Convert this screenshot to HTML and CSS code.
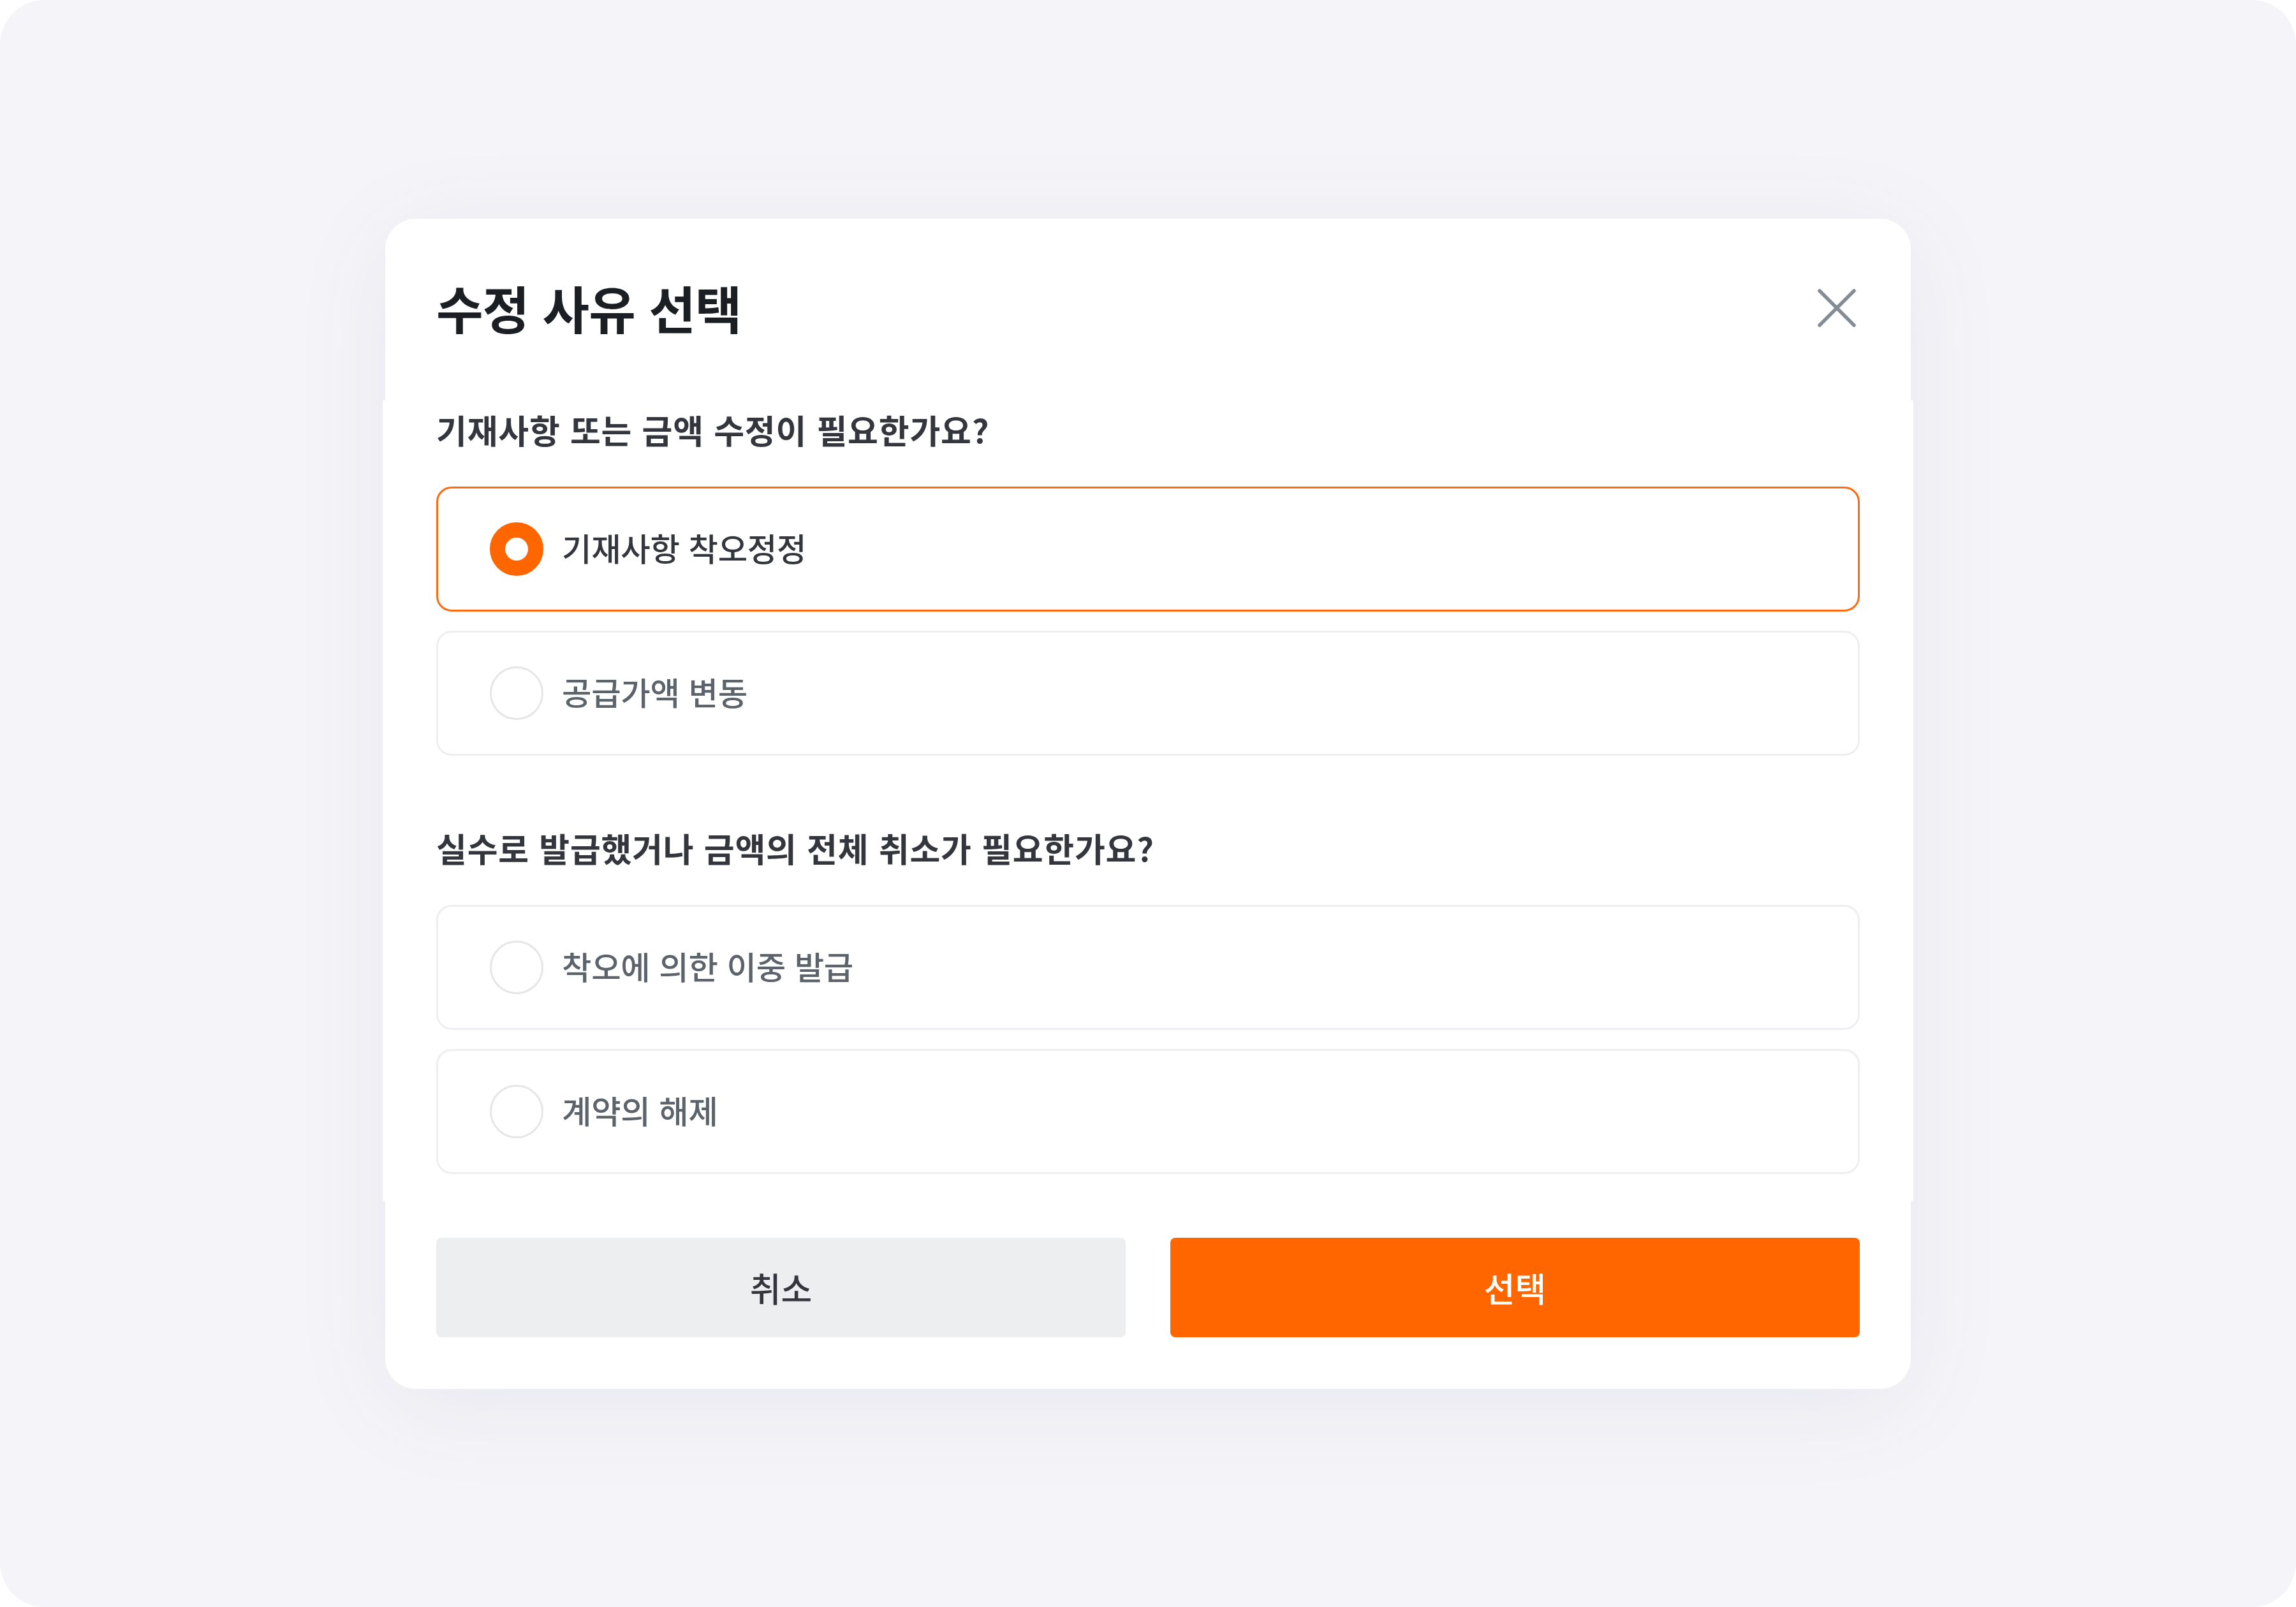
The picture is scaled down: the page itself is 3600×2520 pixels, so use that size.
FILE: index.html
```html
<!DOCTYPE html>
<html lang="ko">
<head>
<meta charset="utf-8">
<title>수정 사유 선택</title>
<link rel="stylesheet" href="styles.css">
</head>
<body>
<div class="screen">
  <div class="modal" role="dialog" aria-labelledby="modal-title">
    <div class="modal-head">
      <h2 class="modal-title" id="modal-title">수정 사유 선택</h2>
      <button class="close-btn" type="button" aria-label="닫기">
        <svg viewBox="0 0 66 66" width="66" height="66" aria-hidden="true">
          <path d="M6 6 L60 60 M60 6 L6 60" stroke="#868c94" stroke-width="5.5" stroke-linecap="round" fill="none"/>
        </svg>
      </button>
    </div>
    <div class="modal-body">
      <section class="group">
        <h3 class="question">기재사항 또는 금액 수정이 필요한가요?</h3>
        <div class="options">
          <label class="option is-selected"><span class="radio"></span><span class="option-label">기재사항 착오정정</span></label>
          <label class="option"><span class="radio"></span><span class="option-label">공급가액 변동</span></label>
        </div>
      </section>
      <section class="group">
        <h3 class="question">실수로 발급했거나 금액의 전체 취소가 필요한가요?</h3>
        <div class="options">
          <label class="option"><span class="radio"></span><span class="option-label">착오에 의한 이중 발급</span></label>
          <label class="option"><span class="radio"></span><span class="option-label">계약의 해제</span></label>
        </div>
      </section>
    </div>
    <div class="modal-foot">
      <button class="btn btn-cancel" type="button">취소</button>
      <button class="btn btn-primary" type="button">선택</button>
    </div>
  </div>
</div>
</body>
</html>
```

FILE: styles.css
```css
html, body {
  margin: 0;
  padding: 0;
  background: #ffffff;
}

.screen {
  width: 3600px;
  height: 2520px;
  box-sizing: border-box;
  border-radius: 70px;
  background: #f5f5f9;
  display: flex;
  justify-content: center;
  align-items: flex-start;
  padding-top: 343px;
  font-family: "Noto Sans CJK KR", "Noto Sans", sans-serif;
}

.modal {
  width: 2392px;
  box-sizing: border-box;
  background: #ffffff;
  border-radius: 48px;
  padding: 98px 80px 81px;
  box-shadow: 0 24px 160px rgba(40, 40, 100, 0.07);
}

.modal-head {
  display: flex;
  align-items: center;
  justify-content: space-between;
  height: 80px;
}

.modal-title {
  margin: 0;
  font-size: 80px;
  line-height: 80px;
  font-weight: 700;
  letter-spacing: -1px;
  color: #1b1e23;
}

.close-btn {
  border: 0;
  background: none;
  padding: 0;
  margin-right: 3px;
  margin-top: 4px;
  width: 66px;
  height: 66px;
  display: flex;
  cursor: pointer;
}

.modal-body {
  margin: 107px -84px 0;
  padding: 20px 84px 42px;
  background: #ffffff;
}

.group + .group {
  margin-top: 119px;
}

.question {
  margin: 0 0 63px;
  font-size: 52px;
  line-height: 52px;
  font-weight: 700;
  letter-spacing: 0.8px;
  color: #33373d;
}

.options {
  display: flex;
  flex-direction: column;
  gap: 30px;
}

.option {
  display: flex;
  align-items: center;
  height: 196px;
  box-sizing: border-box;
  border: 3px solid #eceef1;
  border-radius: 24px;
  padding-left: 81px;
  cursor: pointer;
}

.option.is-selected {
  border-color: #ff6a10;
}

.radio {
  flex: none;
  width: 84px;
  height: 84px;
  box-sizing: border-box;
  border-radius: 50%;
  border: 3px solid #e4e6ea;
  background: #ffffff;
}

.option.is-selected .radio {
  border: 24px solid #ff6600;
}

.option-label {
  margin-left: 29px;
  margin-bottom: 6px;
  font-size: 50.5px;
  line-height: 50.5px;
  font-weight: 500;
  letter-spacing: -0.3px;
  color: #5c636b;
}

.option.is-selected .option-label {
  color: #33373d;
}

.modal-foot {
  display: grid;
  grid-template-columns: 1fr 1fr;
  gap: 70px;
  margin-top: 58px;
}

.btn {
  height: 156px;
  border: 0;
  border-radius: 8px;
  font-family: inherit;
  font-size: 53px;
  font-weight: 500;
  cursor: pointer;
}

.btn-cancel {
  background: #edeef0;
  color: #33373d;
}

.btn-primary {
  background: #ff6600;
  color: #ffffff;
}
```
